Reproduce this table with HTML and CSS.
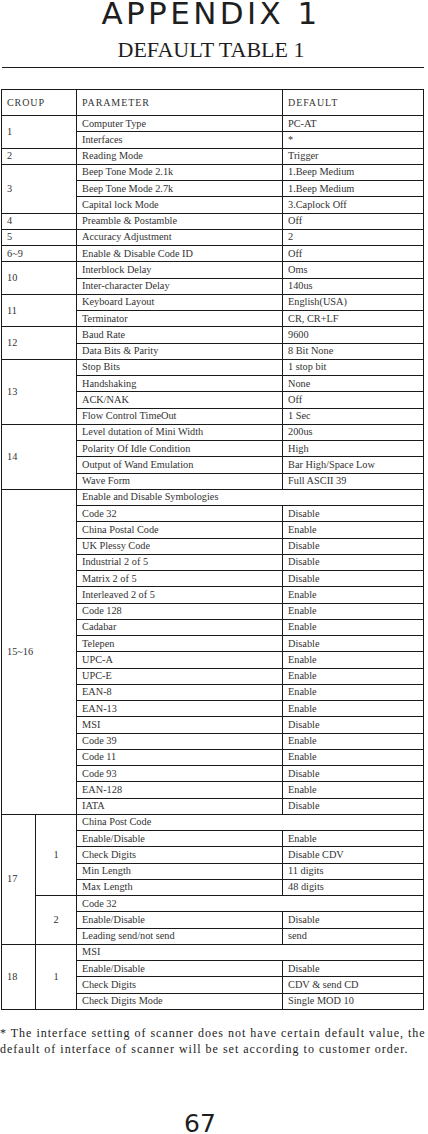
FILE: index.html
```html
<!DOCTYPE html>
<html lang="en">
<head>
<meta charset="utf-8">
<title>Appendix 1 - Default Table 1</title>
<link rel="stylesheet" href="styles.css">
</head>
<body>
<div class="page">
  <h1 class="title">APPENDIX 1</h1>
  <h2 class="subtitle">DEFAULT TABLE 1</h2>
  <div class="rule"></div>
  <table class="defaults">
    <colgroup><col class="c-a"><col class="c-b"><col class="c-param"><col class="c-def"></colgroup>
    <thead>
      <tr><th colspan="2">CROUP</th><th>PARAMETER</th><th>DEFAULT</th></tr>
    </thead>
    <tbody>
      <tr><td colspan="2" rowspan="2">1</td><td>Computer Type</td><td>PC-AT</td></tr>
      <tr><td>Interfaces</td><td>*</td></tr>
      <tr><td colspan="2">2</td><td>Reading Mode</td><td>Trigger</td></tr>
      <tr><td colspan="2" rowspan="3">3</td><td>Beep Tone Mode 2.1k</td><td>1.Beep Medium</td></tr>
      <tr><td>Beep Tone Mode 2.7k</td><td>1.Beep Medium</td></tr>
      <tr><td>Capital lock Mode</td><td>3.Caplock Off</td></tr>
      <tr><td colspan="2">4</td><td>Preamble &amp; Postamble</td><td>Off</td></tr>
      <tr><td colspan="2">5</td><td>Accuracy Adjustment</td><td>2</td></tr>
      <tr><td colspan="2">6~9</td><td>Enable &amp; Disable Code ID</td><td>Off</td></tr>
      <tr><td colspan="2" rowspan="2">10</td><td>Interblock Delay</td><td>Oms</td></tr>
      <tr><td>Inter-character Delay</td><td>140us</td></tr>
      <tr><td colspan="2" rowspan="2">11</td><td>Keyboard Layout</td><td>English(USA)</td></tr>
      <tr><td>Terminator</td><td>CR, CR+LF</td></tr>
      <tr><td colspan="2" rowspan="2">12</td><td>Baud Rate</td><td>9600</td></tr>
      <tr><td>Data Bits &amp; Parity</td><td>8 Bit None</td></tr>
      <tr><td colspan="2" rowspan="4">13</td><td>Stop Bits</td><td>1 stop bit</td></tr>
      <tr><td>Handshaking</td><td>None</td></tr>
      <tr><td>ACK/NAK</td><td>Off</td></tr>
      <tr><td>Flow Control TimeOut</td><td>1 Sec</td></tr>
      <tr><td colspan="2" rowspan="4">14</td><td>Level dutation of Mini Width</td><td>200us</td></tr>
      <tr><td>Polarity Of Idle Condition</td><td>High</td></tr>
      <tr><td>Output of Wand Emulation</td><td>Bar High/Space Low</td></tr>
      <tr><td>Wave Form</td><td>Full ASCII 39</td></tr>
      <tr><td colspan="2" rowspan="20">15~16</td><td colspan="2">Enable and Disable Symbologies</td></tr>
      <tr><td>Code 32</td><td>Disable</td></tr>
      <tr><td>China Postal Code</td><td>Enable</td></tr>
      <tr><td>UK Plessy Code</td><td>Disable</td></tr>
      <tr><td>Industrial 2 of 5</td><td>Disable</td></tr>
      <tr><td>Matrix 2 of 5</td><td>Disable</td></tr>
      <tr><td>Interleaved 2 of 5</td><td>Enable</td></tr>
      <tr><td>Code 128</td><td>Enable</td></tr>
      <tr><td>Cadabar</td><td>Enable</td></tr>
      <tr><td>Telepen</td><td>Disable</td></tr>
      <tr><td>UPC-A</td><td>Enable</td></tr>
      <tr><td>UPC-E</td><td>Enable</td></tr>
      <tr><td>EAN-8</td><td>Enable</td></tr>
      <tr><td>EAN-13</td><td>Enable</td></tr>
      <tr><td>MSI</td><td>Disable</td></tr>
      <tr><td>Code 39</td><td>Enable</td></tr>
      <tr><td>Code 11</td><td>Enable</td></tr>
      <tr><td>Code 93</td><td>Disable</td></tr>
      <tr><td>EAN-128</td><td>Enable</td></tr>
      <tr><td>IATA</td><td>Disable</td></tr>
      <tr><td rowspan="8">17</td><td rowspan="5" class="sub">1</td><td colspan="2">China Post Code</td></tr>
      <tr><td>Enable/Disable</td><td>Enable</td></tr>
      <tr><td>Check Digits</td><td>Disable CDV</td></tr>
      <tr><td>Min Length</td><td>11 digits</td></tr>
      <tr><td>Max Length</td><td>48 digits</td></tr>
      <tr><td rowspan="3" class="sub">2</td><td colspan="2">Code 32</td></tr>
      <tr><td>Enable/Disable</td><td>Disable</td></tr>
      <tr><td>Leading send/not send</td><td>send</td></tr>
      <tr><td rowspan="4">18</td><td rowspan="4" class="sub">1</td><td colspan="2">MSI</td></tr>
      <tr><td>Enable/Disable</td><td>Disable</td></tr>
      <tr><td>Check Digits</td><td>CDV &amp; send CD</td></tr>
      <tr><td>Check Digits Mode</td><td>Single MOD 10</td></tr>
    </tbody>
  </table>
  <p class="note">* The interface setting of scanner does not have certain default value, the default of interface of scanner will be set according to customer order.</p>
  <div class="page-num">67</div>
</div>
</body>
</html>
```

FILE: styles.css
```css
html, body {
  margin: 0;
  padding: 0;
  background: #ffffff;
}

.page {
  width: 428px;
  height: 1134px;
  overflow: hidden;
  color: #222;
}

.title {
  margin: 0;
  width: 422px;
  text-align: center;
  font-family: "DejaVu Sans", "Liberation Sans", sans-serif;
  font-weight: normal;
  font-size: 31px;
  line-height: 27px;
  letter-spacing: 3.4px;
  color: #1e1e1e;
}

.subtitle {
  margin: 12px 0 0;
  width: 422px;
  text-align: center;
  font-family: "Liberation Serif", serif;
  font-weight: normal;
  font-size: 22px;
  line-height: 22px;
  color: #1e1e1e;
}

.rule {
  margin: 6px 0 0 2px;
  width: 422px;
  border-top: 1px solid #1a1a1a;
}

.defaults {
  margin: 21px 0 0 1px;
  width: 422px;
  table-layout: fixed;
  border-collapse: collapse;
  font-family: "Liberation Serif", serif;
  font-size: 10.3px;
  line-height: 12px;
  color: #333;
}

.c-a { width: 34px; }
.c-b { width: 41px; }
.c-param { width: 206px; }
.c-def { width: 141px; }

.defaults th,
.defaults td {
  border: 1px solid #1a1a1a;
  padding: 0 5px;
  text-align: left;
  vertical-align: middle;
  white-space: nowrap;
  overflow: hidden;
}

.defaults th {
  font-weight: normal;
  font-size: 10px;
  letter-spacing: 0.9px;
  height: 25px;
}

.defaults tbody tr {
  height: 16.25px;
}

.defaults td.sub {
  text-align: center;
}

.note {
  margin: 15px 0 0;
  font-family: "Liberation Serif", serif;
  font-size: 12px;
  line-height: 16px;
  letter-spacing: 1px;
  color: #222;
  white-space: normal;
}

.page-num {
  margin-top: 56px;
  width: 400px;
  text-align: center;
  font-family: "DejaVu Sans", "Liberation Sans", sans-serif;
  font-size: 25px;
  line-height: 22px;
  color: #1e1e1e;
}
```
